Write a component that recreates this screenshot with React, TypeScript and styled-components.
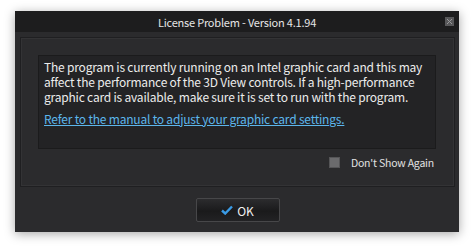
import React, { useState } from "react";
import styled, { createGlobalStyle } from "styled-components";

const GlobalStyle = createGlobalStyle`
    html, body {
        margin: 0;
        padding: 0;
        background: #ffffff;
    }
    body {
        font-family: "Noto Sans CJK KR", "Open Sans", sans-serif;
    }
`;

const SPage = styled.div`
    width: 474px;
    height: 252px;
    padding: 11px 15px 0;
    box-sizing: border-box;
`;

const SWindow = styled.div`
    width: 444px;
    height: 221px;
    display: flex;
    flex-direction: column;
    background: #2b2b2d;
    box-shadow: 0 2px 10px rgba(0, 0, 0, 0.35);
`;

const STitleBar = styled.div`
    height: 21px;
    flex: none;
    display: flex;
    align-items: center;
    justify-content: center;
    position: relative;
    background: #1d1d1e;
    color: #e6e6e6;
    font-size: 11px;
    letter-spacing: -0.2px;
`;

const SClose = styled.div`
    position: absolute;
    right: 5px;
    top: 6px;
    width: 9px;
    height: 9px;
    background: #58585a;
    display: flex;
    align-items: center;
    justify-content: center;
`;

const SFrame = styled.div`
    margin: 5px 4px 0 5px;
    height: 150px;
    box-sizing: border-box;
    border: 1px solid #1f1f21;
    box-shadow: inset 0 0 0 1px #333335;
    padding: 17px 18px 0 17px;
    display: flex;
    flex-direction: column;
`;

const SMessage = styled.div`
    height: 94px;
    box-sizing: border-box;
    background: #232325;
    border: 1px solid #1b1b1c;
    padding: 3px 5px;
    color: #ececec;
    font-size: 12px;
    letter-spacing: -0.2px;
    line-height: 15px;
`;

const SLink = styled.a`
    display: block;
    margin-top: 7px;
    color: #5cb6ec;
    text-decoration: underline;
    cursor: pointer;
`;

const SOption = styled.label`
    display: flex;
    align-items: center;
    justify-content: flex-end;
    gap: 11px;
    margin-top: 6px;
    padding-right: 2px;
    color: #e2e2e2;
    font-size: 10.5px;
    letter-spacing: -0.2px;
    line-height: 15px;
`;

const SBox = styled.span<{ $checked: boolean }>`
    width: 11px;
    height: 11px;
    box-sizing: border-box;
    background: ${(p) => (p.$checked ? "#4a9fe0" : "#6b6b6d")};
    border: 1px solid #555557;
`;

const SFooter = styled.div`
    flex: 1;
    display: flex;
    align-items: center;
    justify-content: center;
`;

const SButton = styled.button`
    width: 84px;
    height: 24px;
    display: flex;
    align-items: center;
    justify-content: center;
    gap: 4px;
    padding: 0;
    border: 1px solid #474749;
    border-radius: 2px;
    background: linear-gradient(#2c2c2e, #1a1a1b 55%, #222224);
    color: #f0f0f0;
    font-family: "Noto Sans CJK KR", "Open Sans", sans-serif;
    font-size: 12px;
    margin-left: 1px;
    margin-top: 1px;
`;

const App = () => {
    const [dontShow, setDontShow] = useState(false);

    return (
        <SPage>
            <GlobalStyle />
            <SWindow>
                <STitleBar>
                    License Problem - Version 4.1.94
                    <SClose>
                        <svg width="7" height="7" viewBox="0 0 7 7">
                            <path
                                d="M1 1L6 6M6 1L1 6"
                                stroke="#9a9a9c"
                                strokeWidth="1"
                            />
                        </svg>
                    </SClose>
                </STitleBar>
                <SFrame>
                    <SMessage>
                        The program is currently running on an Intel graphic
                        card and this may affect the performance of the 3D View
                        controls. If a high-performance graphic card is
                        available, make sure it is set to run with the program.
                        <SLink>
                            Refer to the manual to adjust your graphic card
                            settings.
                        </SLink>
                    </SMessage>
                    <SOption onClick={() => setDontShow(!dontShow)}>
                        <SBox $checked={dontShow} />
                        Don't Show Again
                    </SOption>
                </SFrame>
                <SFooter>
                    <SButton>
                        <svg width="12" height="10" viewBox="0 0 12 10">
                            <path
                                d="M1 5.5L4.2 8.5L11 1.5"
                                fill="none"
                                stroke="#3a9be6"
                                strokeWidth="2.4"
                            />
                        </svg>
                        OK
                    </SButton>
                </SFooter>
            </SWindow>
        </SPage>
    );
};

export default App;
